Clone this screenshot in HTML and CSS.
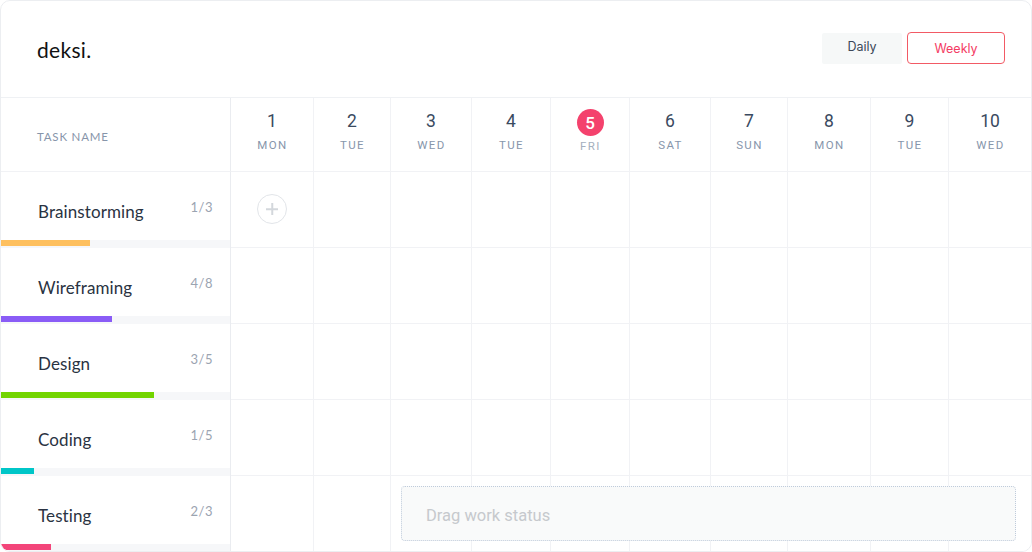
FILE: index.html
```html
<!DOCTYPE html>
<html lang="en">
<head>
<meta charset="utf-8">
<title>deksi. planner</title>
<link rel="stylesheet" href="styles.css">
</head>
<body>
<div class="card">
  <header class="header">
    <div class="logo">deksi.</div>
    <div class="toggle">
      <button class="btn btn-daily">Daily</button>
      <button class="btn btn-weekly">Weekly</button>
    </div>
  </header>
  <div class="grid">
    <div class="cell head task-head">TASK NAME</div>
    <div class="cell head day"><span class="num">1</span><span class="dname">MON</span></div>
    <div class="cell head day"><span class="num">2</span><span class="dname">TUE</span></div>
    <div class="cell head day"><span class="num">3</span><span class="dname">WED</span></div>
    <div class="cell head day"><span class="num">4</span><span class="dname">TUE</span></div>
    <div class="cell head day today"><span class="num">5</span><span class="dname">FRI</span></div>
    <div class="cell head day"><span class="num">6</span><span class="dname">SAT</span></div>
    <div class="cell head day"><span class="num">7</span><span class="dname">SUN</span></div>
    <div class="cell head day"><span class="num">8</span><span class="dname">MON</span></div>
    <div class="cell head day"><span class="num">9</span><span class="dname">TUE</span></div>
    <div class="cell head day last"><span class="num">10</span><span class="dname">WED</span></div>

    <div class="cell task">
      <div class="task-body"><span class="tname">Brainstorming</span><span class="count">1/3</span></div>
      <div class="track"><div class="fill fill-yellow" style="width:39%"></div></div>
    </div>
    <div class="cell slot"><span class="add"></span></div>
    <div class="cell slot"></div><div class="cell slot"></div><div class="cell slot"></div><div class="cell slot"></div>
    <div class="cell slot"></div><div class="cell slot"></div><div class="cell slot"></div><div class="cell slot"></div><div class="cell slot last"></div>

    <div class="cell task">
      <div class="task-body"><span class="tname">Wireframing</span><span class="count">4/8</span></div>
      <div class="track"><div class="fill fill-purple" style="width:48.5%"></div></div>
    </div>
    <div class="cell slot"></div><div class="cell slot"></div><div class="cell slot"></div><div class="cell slot"></div><div class="cell slot"></div>
    <div class="cell slot"></div><div class="cell slot"></div><div class="cell slot"></div><div class="cell slot"></div><div class="cell slot last"></div>

    <div class="cell task">
      <div class="task-body"><span class="tname">Design</span><span class="count">3/5</span></div>
      <div class="track"><div class="fill fill-green" style="width:67%"></div></div>
    </div>
    <div class="cell slot"></div><div class="cell slot"></div><div class="cell slot"></div><div class="cell slot"></div><div class="cell slot"></div>
    <div class="cell slot"></div><div class="cell slot"></div><div class="cell slot"></div><div class="cell slot"></div><div class="cell slot last"></div>

    <div class="cell task">
      <div class="task-body"><span class="tname">Coding</span><span class="count">1/5</span></div>
      <div class="track"><div class="fill fill-teal" style="width:14.3%"></div></div>
    </div>
    <div class="cell slot"></div><div class="cell slot"></div><div class="cell slot"></div><div class="cell slot"></div><div class="cell slot"></div>
    <div class="cell slot"></div><div class="cell slot"></div><div class="cell slot"></div><div class="cell slot"></div><div class="cell slot last"></div>

    <div class="cell task">
      <div class="task-body"><span class="tname">Testing</span><span class="count">2/3</span></div>
      <div class="track"><div class="fill fill-pink" style="width:22%"></div></div>
    </div>
    <div class="cell slot"></div>
    <div class="cell slot"></div>
    <div class="cell slot drop-host"><div class="dropzone">Drag work status</div></div>
    <div class="cell slot"></div><div class="cell slot"></div>
    <div class="cell slot"></div><div class="cell slot"></div><div class="cell slot"></div><div class="cell slot"></div><div class="cell slot last"></div>
  </div>
</div>
</body>
</html>
```

FILE: styles.css
```css
* { box-sizing: border-box; }

html, body {
  margin: 0;
  padding: 0;
  background: #ffffff;
}

body {
  font-family: "Lato", "Noto Sans", sans-serif;
  color: #2a3342;
}

.card {
  width: 1032px;
  height: 552px;
  border: 1px solid #eceef1;
  border-radius: 10px;
  overflow: hidden;
  background: #ffffff;
}

.header {
  height: 97px;
  border-bottom: 1px solid #eff1f4;
  display: flex;
  align-items: center;
  justify-content: space-between;
  padding: 0 26px 0 36px;
}

.logo {
  font-family: "Lato", sans-serif;
  font-size: 21px;
  font-weight: 400;
  color: #111111;
  letter-spacing: 0.3px;
  margin-top: 1px;
}

.toggle {
  display: flex;
  align-items: center;
  gap: 5px;
  margin-top: -2px;
}

.btn {
  font-family: "Inter", "Roboto", sans-serif;
  font-size: 12.5px;
  border-radius: 4px;
  cursor: pointer;
  padding: 0;
}

.btn-daily {
  width: 80px;
  height: 31px;
  background: #f6f8f8;
  border: none;
  color: #3c4858;
  padding-bottom: 4px;
  border-radius: 2px;
}

.btn-weekly {
  width: 98px;
  height: 32px;
  background: #ffffff;
  border: 1px solid #f25a65;
  color: #f43b63;
}

.grid {
  display: grid;
  grid-template-columns: 230px 83px 77px 81px 79px 79px 81px 77px 83px 78px 82px;
  grid-template-rows: 74px 76px 76px 76px 76px 76px;
}

.cell {
  border-right: 1px solid #f1f2f5;
  border-bottom: 1px solid #f1f2f5;
  background: #ffffff;
}

.cell.last { border-right: none; }

.head.task-head,
.task {
  border-right: 1px solid #eaecf0;
}

.task-head {
  display: flex;
  align-items: center;
  padding-left: 36px;
  padding-top: 3px;
  font-family: "Lato", sans-serif;
  font-size: 11.5px;
  letter-spacing: 0.8px;
  color: #8795aa;
}

.day {
  display: flex;
  flex-direction: column;
  align-items: center;
  padding-top: 9px;
  font-family: "Roboto", "Inter", sans-serif;
}

.num {
  width: 27px;
  height: 27px;
  border-radius: 50%;
  display: flex;
  align-items: center;
  justify-content: center;
  font-size: 17.5px;
  color: #3a4a60;
}

.dname {
  margin-top: 4px;
  font-size: 11.5px;
  letter-spacing: 1.4px;
  color: #8796ab;
  padding-left: 1px;
}

.today .num {
  background: #f4426d;
  color: #ffffff;
  font-weight: 500;
  font-size: 17px;
  margin-top: 2px;
}

.today .dname {
  color: #a4afbe;
  margin-top: 3px;
}

.task {
  display: flex;
  flex-direction: column;
  border-bottom: none;
}

.task-body {
  flex: 1;
  display: flex;
  align-items: flex-start;
  justify-content: space-between;
  padding: 27px 17px 0 37px;
}

.tname {
  font-size: 17px;
  color: #2a3342;
  padding-top: 2px;
  letter-spacing: 0.1px;
}

.count {
  font-size: 13px;
  color: #9ba4b1;
  letter-spacing: 0.5px;
}

.track {
  height: 8px;
  background: #f6f7f9;
}

.fill {
  height: 6px;
}

.fill-yellow { background: #fec05f; }
.fill-purple { background: #8a5cf6; }
.fill-green  { background: #72d400; }
.fill-teal   { background: #00c6c8; }
.fill-pink   { background: #f3457a; }

.slot {
  display: flex;
  align-items: flex-start;
  justify-content: center;
}

.add {
  position: relative;
  width: 30px;
  height: 30px;
  margin-top: 22px;
  border: 1px solid #e2e5e9;
  border-radius: 50%;
}

.add::before,
.add::after {
  content: "";
  position: absolute;
  left: 50%;
  top: 50%;
  background: #d3d7dc;
}

.add::before {
  width: 12px;
  height: 1.5px;
  transform: translate(-50%, -50%);
}

.add::after {
  width: 1.5px;
  height: 12px;
  transform: translate(-50%, -50%);
}

.drop-host {
  position: relative;
}

.dropzone {
  position: absolute;
  left: 10px;
  top: 10px;
  width: 615px;
  height: 55px;
  z-index: 2;
  background: #f9fafa;
  border: 1px dotted #bfcbdb;
  border-radius: 4px;
  display: flex;
  align-items: center;
  padding-left: 24px;
  padding-top: 3px;
  font-family: "Roboto", "Inter", sans-serif;
  font-size: 16.5px;
  color: #c6c9cd;
}
```
